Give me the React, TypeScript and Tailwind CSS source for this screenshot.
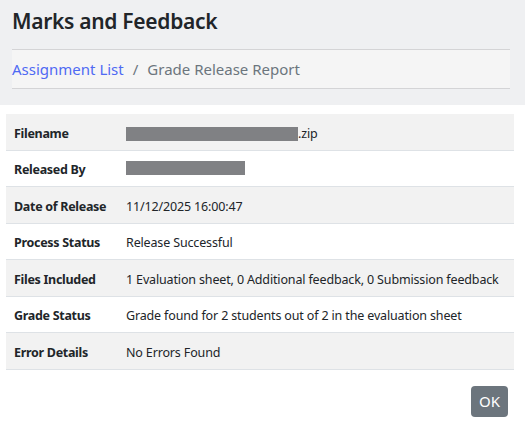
const rows: { label: string; value: React.ReactNode; shaded: boolean }[] = [
  {
    label: 'Filename',
    value: (
      <span className="flex items-center">
        <span className="inline-block h-[14px] w-[172px] bg-[#808184]" />
        <span>.zip</span>
      </span>
    ),
    shaded: true,
  },
  {
    label: 'Released By',
    value: <span className="inline-block h-[14px] w-[119px] bg-[#808184]" />,
    shaded: false,
  },
  { label: 'Date of Release', value: '11/12/2025 16:00:47', shaded: true },
  { label: 'Process Status', value: 'Release Successful', shaded: false },
  {
    label: 'Files Included',
    value: '1 Evaluation sheet, 0 Additional feedback, 0 Submission feedback',
    shaded: true,
  },
  {
    label: 'Grade Status',
    value: 'Grade found for 2 students out of 2 in the evaluation sheet',
    shaded: false,
  },
  { label: 'Error Details', value: 'No Errors Found', shaded: true },
];

export default function App() {
  return (
    <div className="w-[525px] h-[426px] bg-white text-[#212529] font-['Noto_Sans',sans-serif] overflow-hidden">
      {/* page header */}
      <div className="h-[105px] bg-[#eff0f2] px-3 pt-[7px]">
        <h1 className="text-[21px] font-semibold leading-[28px] tracking-[-0.3px]">Marks and Feedback</h1>
        <nav className="mt-[14px] h-[40px] w-[498px] flex items-center border-y border-[#d4d4d6] bg-[#f5f5f5] text-[15px] tracking-[0px]">
          <a className="text-[#4f6af3]">Assignment List</a>
          <span className="mx-[9px] text-[#6c757d]">/</span>
          <span className="text-[#6c757d]">Grade Release Report</span>
        </nav>
      </div>

      {/* report table */}
      <div className="mt-[9px] mx-[6px] w-[508px]">
        {rows.map((r) => (
          <div
            key={r.label}
            className={`grid grid-cols-[112px_1fr] items-center h-[36.5px] border-b border-[#dee2e6] text-[12.5px] ${
              r.shaded ? 'bg-[#f2f2f2]' : 'bg-white'
            }`}
          >
            <div className="px-2 pt-[5px] font-bold tracking-[-0.3px]">{r.label}</div>
            <div className="px-2 pt-[5px] tracking-[-0.15px] whitespace-nowrap">{r.value}</div>
          </div>
        ))}
      </div>

      <div className="flex justify-end pr-[17px] pt-[16px]">
        <button className="h-[31px] w-[37px] rounded-[4px] bg-[#6c757d] text-white text-[15px]">OK</button>
      </div>
    </div>
  );
}
